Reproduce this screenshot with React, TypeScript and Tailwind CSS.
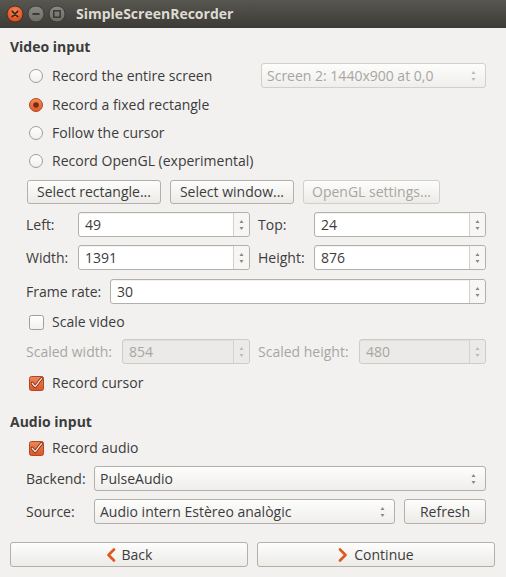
import React from "react";

const FONT = { fontFamily: '"Open Sans", "DejaVu Sans", sans-serif' };

function Radio({ checked }: { checked?: boolean }) {
  return (
    <svg width="16" height="16" viewBox="0 0 16 16" className="shrink-0">
      <defs>
        <linearGradient id="rOff" x1="0" y1="0" x2="0" y2="1">
          <stop offset="0" stopColor="#ffffff" />
          <stop offset="1" stopColor="#f0efec" />
        </linearGradient>
        <linearGradient id="rOn" x1="0" y1="0" x2="0" y2="1">
          <stop offset="0" stopColor="#f58a5c" />
          <stop offset="1" stopColor="#dd5a2a" />
        </linearGradient>
      </defs>
      {checked ? (
        <>
          <circle cx="8" cy="8" r="6.5" fill="url(#rOn)" stroke="#b5461c" strokeWidth="1" />
          <circle cx="8" cy="8" r="2.8" fill="#7a2a0e" />
        </>
      ) : (
        <circle cx="8" cy="8" r="6.5" fill="url(#rOff)" stroke="#a19d97" strokeWidth="1" />
      )}
    </svg>
  );
}

function Check({ checked }: { checked?: boolean }) {
  return (
    <svg width="15" height="15" viewBox="0 0 15 15" className="shrink-0">
      <defs>
        <linearGradient id="cOn" x1="0" y1="0" x2="0" y2="1">
          <stop offset="0" stopColor="#f38557" />
          <stop offset="1" stopColor="#d9552a" />
        </linearGradient>
        <linearGradient id="cOff" x1="0" y1="0" x2="0" y2="1">
          <stop offset="0" stopColor="#ffffff" />
          <stop offset="1" stopColor="#f1f0ee" />
        </linearGradient>
      </defs>
      {checked ? (
        <>
          <rect x="0.5" y="0.5" width="14" height="14" rx="2" fill="url(#cOn)" stroke="#b04820" />
          <path d="M3.2 7.2 L6.2 10.6 L12.6 2.4" fill="none" stroke="#7a2a0e" strokeWidth="3" strokeLinecap="round" strokeLinejoin="round" />
          <path d="M3.2 7.2 L6.2 10.6 L12.6 2.4" fill="none" stroke="#fde6d8" strokeWidth="1.4" strokeLinecap="round" strokeLinejoin="round" />
        </>
      ) : (
        <rect x="0.5" y="0.5" width="14" height="14" rx="2" fill="url(#cOff)" stroke="#a19d97" />
      )}
    </svg>
  );
}

function Arrows({ faded }: { faded?: boolean }) {
  const c = faded ? "#bdbab5" : "#8b8883";
  return (
    <svg width="7" height="14" viewBox="0 0 7 14">
      <path d="M3.5 2 L5.5 5 L1.5 5 Z" fill={c} />
      <path d="M3.5 12 L5.5 9 L1.5 9 Z" fill={c} />
    </svg>
  );
}

function Spin({ value, w, disabled }: { value: string; w: string; disabled?: boolean }) {
  return (
    <div
      className={`flex h-[25px] ${w} items-stretch rounded-[3px] border ${
        disabled ? "border-[#cfccc7] bg-[#ebeae8]" : "border-[#b3afa9] bg-white"
      } shadow-[inset_0_1px_1px_rgba(0,0,0,0.06)]`}
    >
      <div className={`flex flex-1 items-center pl-[6px] ${disabled ? "text-[#a8a6a2]" : "text-[#3c3c3c]"}`}>
        {value}
      </div>
      <div
        className={`flex w-[16px] items-center justify-center border-l ${
          disabled ? "border-[#d6d3ce] bg-[#ebeae8]" : "border-[#d3d0cb] bg-[#f7f6f5]"
        } rounded-r-[3px]`}
      >
        <Arrows faded={disabled} />
      </div>
    </div>
  );
}

function Combo({ value, w, disabled }: { value: string; w: string; disabled?: boolean }) {
  return (
    <div
      className={`flex h-[25px] ${w} items-center justify-between rounded-[3px] border ${
        disabled ? "border-[#d2cfca]" : "border-[#b3afa9]"
      } bg-gradient-to-b from-[#fdfdfc] to-[#efeeec] pl-[5px] pr-[8px] ${
        disabled ? "text-[#a8a6a2]" : "text-[#3c3c3c]"
      }`}
    >
      <span>{value}</span>
      <Arrows faded={disabled} />
    </div>
  );
}

function Btn({ children, w, disabled, className = "" }: { children: React.ReactNode; w: string; disabled?: boolean; className?: string }) {
  return (
    <div
      className={`flex h-[24px] ${w} items-center justify-center rounded-[3px] border ${
        disabled ? "border-[#d2cfca] text-[#a8a6a2]" : "border-[#b3afa9] text-[#3c3c3c]"
      } bg-gradient-to-b from-[#fdfdfc] to-[#ecebe8] ${className}`}
    >
      {children}
    </div>
  );
}

export default function App() {
  return (
    <div className="h-[577px] w-[506px] overflow-hidden bg-[#f2f1f0] text-[14px] leading-none text-[#3c3c3c]" style={FONT}>
      {/* title bar */}
      <div className="flex h-[28px] items-center bg-gradient-to-b from-[#57564f] to-[#3c3b37] pl-[6px]">
        <div className="flex items-center gap-[3px]">
          <svg width="18" height="18" viewBox="0 0 18 18">
            <defs>
              <radialGradient id="cl" cx="0.5" cy="0.35" r="0.6">
                <stop offset="0" stopColor="#f68a5a" />
                <stop offset="1" stopColor="#df4b1b" />
              </radialGradient>
            </defs>
            <circle cx="9" cy="9" r="8" fill="url(#cl)" stroke="#3a2b25" strokeWidth="0.8" />
            <path d="M6.3 6.3 L11.7 11.7 M11.7 6.3 L6.3 11.7" stroke="#3c2a22" strokeWidth="1.8" strokeLinecap="round" />
          </svg>
          <svg width="18" height="18" viewBox="0 0 18 18">
            <defs>
              <linearGradient id="gb" x1="0" y1="0" x2="0" y2="1">
                <stop offset="0" stopColor="#8a8983" />
                <stop offset="1" stopColor="#6c6b66" />
              </linearGradient>
            </defs>
            <circle cx="9" cy="9" r="8" fill="url(#gb)" stroke="#34332f" strokeWidth="0.8" />
            <path d="M5.5 9 L12.5 9" stroke="#3a3935" strokeWidth="2" />
          </svg>
          <svg width="18" height="18" viewBox="0 0 18 18">
            <circle cx="9" cy="9" r="8" fill="url(#gb)" stroke="#34332f" strokeWidth="0.8" />
            <rect x="5.8" y="5.8" width="6.4" height="6.4" fill="none" stroke="#3a3935" strokeWidth="1.5" />
          </svg>
        </div>
        <span className="ml-[10px] text-[14px] font-bold text-[#dfdbd2]">SimpleScreenRecorder</span>
      </div>

      {/* video input */}
      <div className="mt-[9px] flex h-[20px] items-center pl-[10px] font-bold">Video input</div>

      <div className="flex flex-col pl-[26px] pr-[20px]">
        <div className="mt-[6px] flex h-[25px] items-center justify-between">
          <div className="flex items-center gap-[8px] pl-[2px]">
            <Radio />
            <span>Record the entire screen</span>
          </div>
          <Combo value="Screen 2: 1440x900 at 0,0" w="w-[225px]" disabled />
        </div>
        <div className="mt-[3px] flex h-[28px] items-center gap-[8px] pl-[2px]">
          <Radio checked />
          <span>Record a fixed rectangle</span>
        </div>
        <div className="flex h-[28px] items-center gap-[8px] pl-[2px]">
          <Radio />
          <span>Follow the cursor</span>
        </div>
        <div className="flex h-[28px] items-center gap-[8px] pl-[2px]">
          <Radio />
          <span>Record OpenGL (experimental)</span>
        </div>

        <div className="mt-[5px] flex h-[24px] items-center gap-[9px] pl-[1px]">
          <Btn w="w-[134px]">Select rectangle...</Btn>
          <Btn w="w-[124px]">Select window...</Btn>
          <Btn w="w-[137px]" disabled>
            OpenGL settings...
          </Btn>
        </div>

        <div className="mt-[8px] flex h-[25px] items-center">
          <span className="w-[52px]">Left:</span>
          <Spin value="49" w="w-[172px]" />
          <span className="ml-[8px] w-[56px]">Top:</span>
          <Spin value="24" w="w-[172px]" />
        </div>
        <div className="mt-[8px] flex h-[25px] items-center">
          <span className="w-[52px]">Width:</span>
          <Spin value="1391" w="w-[172px]" />
          <span className="ml-[8px] w-[56px]">Height:</span>
          <Spin value="876" w="w-[172px]" />
        </div>
        <div className="mt-[9px] flex h-[25px] items-center">
          <span className="w-[84px]">Frame rate:</span>
          <Spin value="30" w="flex-1" />
        </div>

        <div className="mt-[6px] flex h-[24px] items-center gap-[8px] pl-[3px]">
          <Check />
          <span>Scale video</span>
        </div>

        <div className="mt-[5px] flex h-[25px] items-center text-[#a8a6a2]">
          <span className="w-[96px]">Scaled width:</span>
          <Spin value="854" w="w-[128px]" disabled />
          <span className="ml-[8px] w-[101px]">Scaled height:</span>
          <Spin value="480" w="w-[127px]" disabled />
        </div>

        <div className="mt-[7px] flex h-[24px] items-center gap-[8px] pl-[3px]">
          <Check checked />
          <span>Record cursor</span>
        </div>
      </div>

      {/* audio input */}
      <div className="mt-[17px] flex h-[20px] items-center pl-[10px] font-bold">Audio input</div>
      <div className="flex flex-col pl-[26px] pr-[20px]">
        <div className="mt-[4px] flex h-[24px] items-center gap-[8px] pl-[3px]">
          <Check checked />
          <span>Record audio</span>
        </div>
        <div className="mt-[6px] flex h-[25px] items-center">
          <span className="w-[68px]">Backend:</span>
          <Combo value="PulseAudio" w="flex-1" />
        </div>
        <div className="mt-[8px] flex h-[25px] items-center">
          <span className="w-[68px]">Source:</span>
          <Combo value="Audio intern Estèreo analògic" w="w-[301px]" />
          <Btn w="flex-1" className="ml-[9px] h-[25px]">
            Refresh
          </Btn>
        </div>
      </div>

      <div className="mt-[18px] flex gap-[9px] pl-[10px] pr-[11px]">
        <Btn w="flex-1" className="h-[25px] gap-[6px]">
          <svg width="10" height="14" viewBox="0 0 10 14">
            <path d="M8 1.5 L2.5 7 L8 12.5" fill="none" stroke="#e2571e" strokeWidth="2.6" strokeLinejoin="round" strokeLinecap="round" />
          </svg>
          <span>Back</span>
        </Btn>
        <Btn w="flex-1" className="h-[25px] gap-[6px]">
          <svg width="10" height="14" viewBox="0 0 10 14">
            <path d="M2 1.5 L7.5 7 L2 12.5" fill="none" stroke="#e2571e" strokeWidth="2.6" strokeLinejoin="round" strokeLinecap="round" />
          </svg>
          <span>Continue</span>
        </Btn>
      </div>
    </div>
  );
}
